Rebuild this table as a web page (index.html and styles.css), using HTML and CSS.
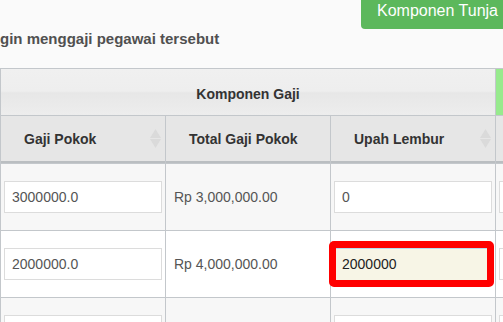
FILE: index.html
```html
<!DOCTYPE html>
<html lang="id">
<head>
<meta charset="utf-8">
<title>Komponen Gaji</title>
<link rel="stylesheet" href="styles.css">
</head>
<body>
<div class="page">
  <div class="toolbar">
    <button type="button" class="btn-success">Komponen Tunja</button>
  </div>
  <p class="note">gin menggaji pegawai tersebut</p>

  <div class="salary-grid">
    <div class="group-head">Komponen Gaji</div>
    <div class="group-head group-next"></div>

    <div class="col-head">Gaji Pokok<svg class="sort" viewBox="0 0 11 19" width="11" height="19"><path d="M5.5 0L11 9H0Z"/><path d="M0 10H11L5.5 19Z"/></svg></div>
    <div class="col-head">Total Gaji Pokok</div>
    <div class="col-head">Upah Lembur<svg class="sort" viewBox="0 0 11 19" width="11" height="19"><path d="M5.5 0L11 9H0Z"/><path d="M0 10H11L5.5 19Z"/></svg></div>
    <div class="col-head"></div>

    <div class="cell odd"><input class="field" type="text" value="3000000.0"></div>
    <div class="cell odd money">Rp 3,000,000.00</div>
    <div class="cell odd"><input class="field" type="text" value="0"></div>
    <div class="cell odd"><input class="field" type="text" value=""></div>

    <div class="cell"><input class="field" type="text" value="2000000.0"></div>
    <div class="cell money">Rp 4,000,000.00</div>
    <div class="cell"><span class="flag"><input class="field field-edit" type="text" value="2000000"></span></div>
    <div class="cell"><input class="field" type="text" value=""></div>

    <div class="cell odd"><input class="field" type="text" value=""></div>
    <div class="cell odd money"></div>
    <div class="cell odd"><input class="field" type="text" value=""></div>
    <div class="cell odd"><input class="field" type="text" value=""></div>
  </div>
</div>
</body>
</html>
```

FILE: styles.css
```css
html,
body {
  margin: 0;
  overflow: hidden;
  background: #fafafa;
}

body {
  width: 503px;
  height: 322px;
  font-family: "Liberation Sans", Arial, sans-serif;
  font-size: 14px;
  color: #333;
}

/* top action bar */
.toolbar {
  display: flex;
  justify-content: flex-end;
  margin-right: -19px;
}

.btn-success {
  width: 161px;
  margin-top: -5px;
  padding: 5px 16px 7px;
  font: 16px/22px "Liberation Sans", Arial, sans-serif;
  text-align: left;
  white-space: nowrap;
  color: #fff;
  background: #5cb85c;
  border: 0;
  border-radius: 4px;
}

.note {
  margin: 0 0 19px;
  font-size: 15px;
  line-height: 20px;
  font-weight: bold;
  color: #505050;
}

/* salary table */
.salary-grid {
  display: grid;
  grid-template-columns: 164px 164px 164px 200px;
  grid-template-rows: 46px 47px;
  grid-auto-rows: 66px;
  gap: 1px;
  padding: 1px 0 0 1px;
  width: max-content;
  background: #c3c7cb;
}

.group-head {
  grid-column: span 3;
  display: flex;
  align-items: center;
  justify-content: center;
  padding-top: 4px;
  font-weight: bold;
  color: #333;
  background: linear-gradient(#f0f0f0 0%, #eeeeee 48%, #e7e7e7 52%, #ededed 100%);
}

.group-head.group-next {
  grid-column: span 1;
  background: #97ea8d;
}

.col-head {
  display: flex;
  align-items: center;
  padding: 0 4px 0 23px;
  font-weight: bold;
  color: #333;
  background: #e6e6e6;
  border-bottom: 2px solid #babec1;
}

.sort {
  margin-left: auto;
  fill: #dadada;
}

.cell {
  display: flex;
  align-items: center;
  padding: 0 3px;
  background: #fff;
}

.cell.odd {
  background: #f7f7f7;
}

.money {
  padding-left: 8px;
  color: #555;
}

.field {
  box-sizing: border-box;
  width: 100%;
  height: 32px;
  margin: 0;
  padding: 0 7px;
  font: 14px "Liberation Sans", Arial, sans-serif;
  color: #555;
  background: #fff;
  border: 1px solid #dcdcdc;
  border-radius: 0;
  outline: none;
}

/* value being edited, framed in red */
.flag {
  position: relative;
  display: block;
  width: 100%;
}

.flag::after {
  content: "";
  position: absolute;
  top: -7px;
  bottom: -7px;
  left: -5px;
  right: -2px;
  border: 7px solid #ff0000;
  border-radius: 5px;
  pointer-events: none;
}

.field-edit {
  color: #222;
  background: #f7f5e6;
  border-color: #f7f5e6;
  border-top-color: #b7dbef;
}
```
